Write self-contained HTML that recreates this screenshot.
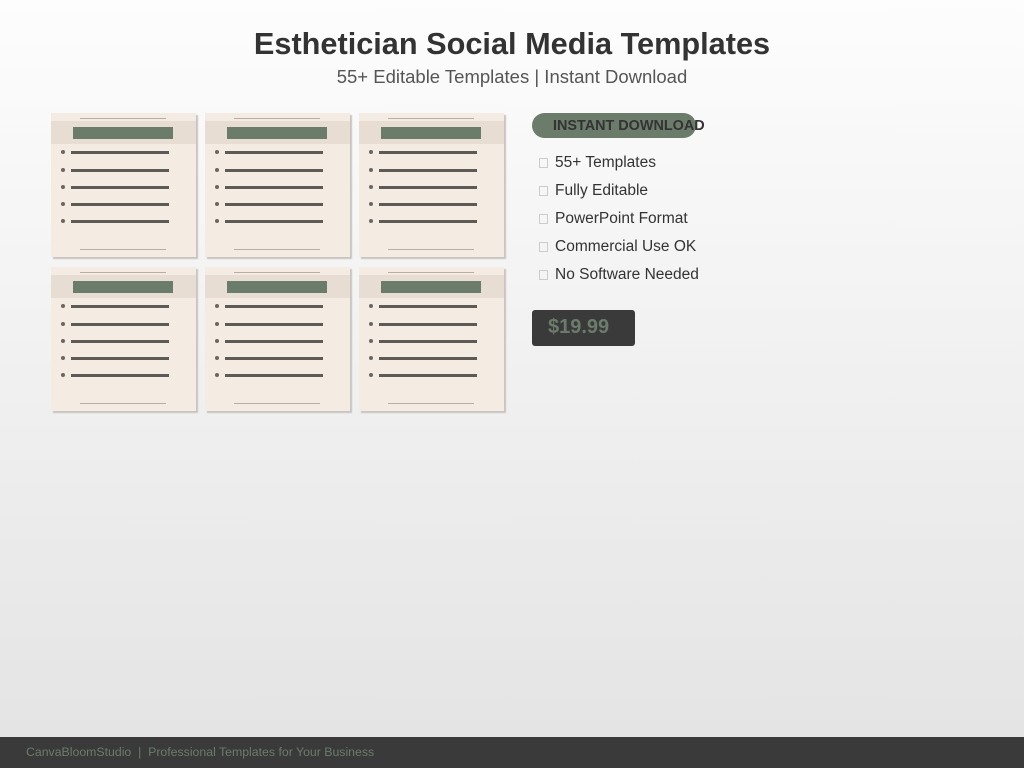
<!DOCTYPE html>
<html><head><style>
*{margin:0;padding:0;box-sizing:border-box}
body{width:1024px;height:768px;overflow:hidden;position:relative;font-family:"Liberation Sans",sans-serif;background:linear-gradient(#fdfdfd,#e4e4e4 737px)}
h1{position:absolute;top:26px;width:100%;text-align:center;font-size:30.7px;font-weight:bold;color:#333}
.sub{position:absolute;top:66px;width:100%;text-align:center;font-size:18.5px;color:#555}
.card{position:absolute;width:145px;height:144px;background:#f4ebe2;box-shadow:2px 2px 1px #c8c4c0}
.card .tl{position:absolute;left:29px;width:86px;height:1px;background:#b8aea4}
.card .band{position:absolute;left:0;top:8px;width:145px;height:23px;background:#e7ddd3}
.card .g{position:absolute;left:22px;top:6px;width:100px;height:12px;background:#6b7c6b}
.card .b{position:absolute;left:10px;width:4px;height:4px;border-radius:50%;background:#6b6760}
.card .l{position:absolute;left:20px;width:98px;height:3px;background:#5e5a56}
.pill{position:absolute;left:532px;top:113px;width:164px;height:25px;border-radius:13px;background:#6b7c6b}
.pilltxt{position:absolute;left:553px;top:118px;font-size:14.4px;font-weight:bold;color:#333}
.feat{position:absolute;left:539px;font-size:15.5px;color:#333}
.feat span{display:inline-block;width:9px;height:10px;border:1px solid #ccc;margin-right:7px;vertical-align:-1px}
.price{position:absolute;left:532px;top:310px;width:103px;height:36px;background:#3a3a3a;border-radius:3px;color:#6b7c6b;font-weight:bold;font-size:20px;padding:6px 0 0 16px}
.foot{position:absolute;left:0;top:737px;width:1024px;height:31px;background:#3a3a3a;color:#6b7c6b;font-size:12.3px;padding:8px 0 0 26px}
</style></head><body>
<h1>Esthetician Social Media Templates</h1>
<div class="sub">55+ Editable Templates | Instant Download</div>
<div class="pill"></div><div class="pilltxt">INSTANT DOWNLOAD</div>
<div class="feat" style="top:154px"><span></span>55+ Templates</div>
<div class="feat" style="top:182px"><span></span>Fully Editable</div>
<div class="feat" style="top:210px"><span></span>PowerPoint Format</div>
<div class="feat" style="top:238px"><span></span>Commercial Use OK</div>
<div class="feat" style="top:266px"><span></span>No Software Needed</div>
<div class="price">$19.99</div>
<div class="foot">CanvaBloomStudio &nbsp;|&nbsp; Professional Templates for Your Business</div>
<div class="card" style="left:51px;top:113px"><div class="tl" style="top:5px"></div><div class="band"><div class="g"></div></div><div class="b" style="top:37px"></div><div class="l" style="top:38px"></div><div class="b" style="top:55px"></div><div class="l" style="top:56px"></div><div class="b" style="top:72px"></div><div class="l" style="top:73px"></div><div class="b" style="top:89px"></div><div class="l" style="top:90px"></div><div class="b" style="top:106px"></div><div class="l" style="top:107px"></div><div class="tl" style="top:136px"></div></div>
<div class="card" style="left:205px;top:113px"><div class="tl" style="top:5px"></div><div class="band"><div class="g"></div></div><div class="b" style="top:37px"></div><div class="l" style="top:38px"></div><div class="b" style="top:55px"></div><div class="l" style="top:56px"></div><div class="b" style="top:72px"></div><div class="l" style="top:73px"></div><div class="b" style="top:89px"></div><div class="l" style="top:90px"></div><div class="b" style="top:106px"></div><div class="l" style="top:107px"></div><div class="tl" style="top:136px"></div></div>
<div class="card" style="left:359px;top:113px"><div class="tl" style="top:5px"></div><div class="band"><div class="g"></div></div><div class="b" style="top:37px"></div><div class="l" style="top:38px"></div><div class="b" style="top:55px"></div><div class="l" style="top:56px"></div><div class="b" style="top:72px"></div><div class="l" style="top:73px"></div><div class="b" style="top:89px"></div><div class="l" style="top:90px"></div><div class="b" style="top:106px"></div><div class="l" style="top:107px"></div><div class="tl" style="top:136px"></div></div>
<div class="card" style="left:51px;top:267px"><div class="tl" style="top:5px"></div><div class="band"><div class="g"></div></div><div class="b" style="top:37px"></div><div class="l" style="top:38px"></div><div class="b" style="top:55px"></div><div class="l" style="top:56px"></div><div class="b" style="top:72px"></div><div class="l" style="top:73px"></div><div class="b" style="top:89px"></div><div class="l" style="top:90px"></div><div class="b" style="top:106px"></div><div class="l" style="top:107px"></div><div class="tl" style="top:136px"></div></div>
<div class="card" style="left:205px;top:267px"><div class="tl" style="top:5px"></div><div class="band"><div class="g"></div></div><div class="b" style="top:37px"></div><div class="l" style="top:38px"></div><div class="b" style="top:55px"></div><div class="l" style="top:56px"></div><div class="b" style="top:72px"></div><div class="l" style="top:73px"></div><div class="b" style="top:89px"></div><div class="l" style="top:90px"></div><div class="b" style="top:106px"></div><div class="l" style="top:107px"></div><div class="tl" style="top:136px"></div></div>
<div class="card" style="left:359px;top:267px"><div class="tl" style="top:5px"></div><div class="band"><div class="g"></div></div><div class="b" style="top:37px"></div><div class="l" style="top:38px"></div><div class="b" style="top:55px"></div><div class="l" style="top:56px"></div><div class="b" style="top:72px"></div><div class="l" style="top:73px"></div><div class="b" style="top:89px"></div><div class="l" style="top:90px"></div><div class="b" style="top:106px"></div><div class="l" style="top:107px"></div><div class="tl" style="top:136px"></div></div>
</body></html>
